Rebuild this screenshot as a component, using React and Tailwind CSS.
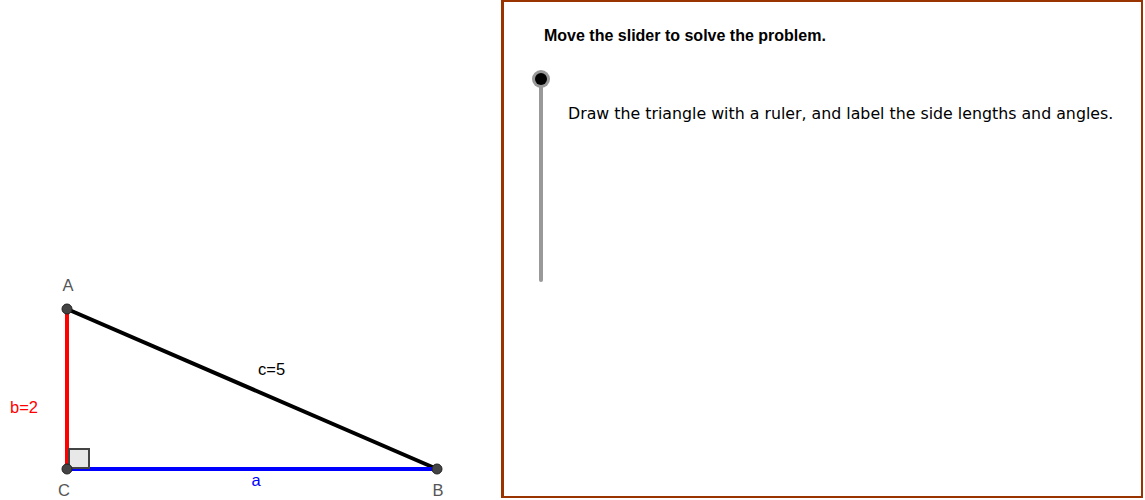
export default function App() {
  return (
    <div className="w-[1145px] h-[500px] flex bg-white overflow-hidden" style={{ fontFamily: '"Liberation Sans", Arial, sans-serif' }}>
      {/* graphics view */}
      <div className="w-[501px] h-[500px] shrink-0">
        <svg width="501" height="500" viewBox="0 0 501 500">
          <line x1="67" y1="309" x2="437" y2="469" stroke="#000" strokeWidth="4" />
          <line x1="67" y1="309" x2="67" y2="469" stroke="#ff0000" strokeWidth="4" />
          <line x1="67" y1="469" x2="437" y2="469" stroke="#0000ff" strokeWidth="4" />
          <rect x="69" y="449" width="20" height="19" fill="#e8e8e8" stroke="#444" strokeWidth="2" />
          <circle cx="67" cy="309" r="5" fill="#444" stroke="#222" strokeWidth="1" />
          <circle cx="67" cy="469" r="5" fill="#444" stroke="#222" strokeWidth="1" />
          <circle cx="437" cy="469" r="5" fill="#444" stroke="#222" strokeWidth="1" />
          <g fontFamily="Liberation Sans, Arial, sans-serif" fontSize="16.5">
            <text x="68" y="291" fill="#555" textAnchor="middle">A</text>
            <text x="64" y="496" fill="#555" textAnchor="middle">C</text>
            <text x="438" y="496" fill="#555" textAnchor="middle">B</text>
            <text x="256" y="486" fill="#0000ff" textAnchor="middle">a</text>
            <text x="10" y="413" fill="#ff0000">b=2</text>
            <text x="258" y="375" fill="#000">c=5</text>
          </g>
        </svg>
      </div>

      {/* text panel */}
      <div className="w-[642px] h-[498px] shrink-0 border-l-[3px] border-t-2 border-r-2 border-b-2 border-[#993300] relative">
        <div className="absolute left-[40px] top-[26px] text-[16px] leading-none font-bold text-black">
          Move the slider to solve the problem.
        </div>
        {/* slider */}
        <div className="absolute left-[35px] top-[77px] w-[4px] h-[203px] bg-[#999] rounded-full" />
        <div className="absolute left-[28px] top-[68px] w-[18px] h-[18px] rounded-full bg-[#999] flex items-center justify-center">
          <div className="w-[12px] h-[12px] rounded-full bg-black" />
        </div>
        <div className="absolute left-[64px] top-[100px] text-black whitespace-nowrap" style={{ fontFamily: '"DejaVu Sans", sans-serif', fontSize: '15.8px' }}>
          Draw the triangle with a ruler, and label the side lengths and angles.
        </div>
      </div>
    </div>
  );
}
